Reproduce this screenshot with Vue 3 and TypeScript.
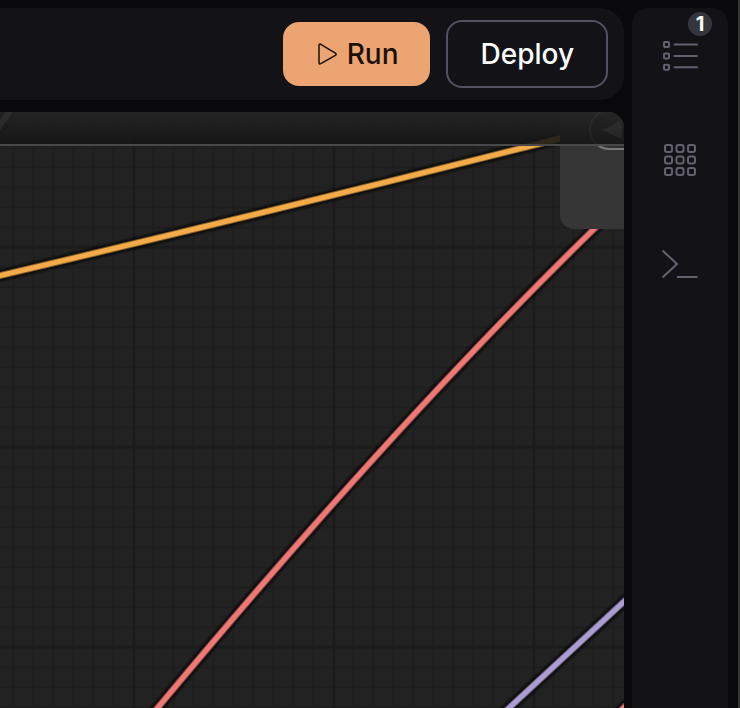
<script setup lang="ts">
interface Wire {
  id: string
  color: string
  d: string
}

const minor = 20
const major = 200

const wires: Wire[] = [
  { id: 'image', color: '#f3ab4a', d: 'M-10 166 L0 163.6 Q285 96.4 570 24' },
  { id: 'model', color: '#ee7873', d: 'M618 94 L593 118 Q396 310 157.5 596 L140 617' },
  { id: 'latent', color: '#ab9cd2', d: 'M640 475 L624 489.6 L509 596 L490 614' },
  { id: 'output', color: '#ee7873', d: 'M640 579 L608 612' },
  { id: 'other', color: '#8d8a9c', d: 'M-9 26 L15 -8' },
]

const halos = [14, 12, 10, 8]

const cells = [0, 1, 2].flatMap((row) =>
  [0, 1, 2].map((col) => ({ x: 5 + col * 11.5, y: 5 + row * 11.5 })),
)
const listRows = [8.5, 20, 31.2]
const queued = 1
</script>

<template>
  <div class="app">
    <main class="workspace">
      <header class="toolbar">
        <button class="btn run" type="button">
          <svg class="play" viewBox="0 0 24 24" aria-hidden="true">
            <path d="M4 3.4V20.6Q4 22.6 5.8 21.7L20.4 13.4Q21.8 12.3 20.4 11.1L5.8 2.3Q4 1.5 4 3.4Z" />
          </svg>
          Run
        </button>
        <button class="btn deploy" type="button">Deploy</button>
      </header>

      <section class="canvas">
        <svg class="graph" aria-hidden="true">
          <defs>
            <pattern id="minor" x="3" y="5" :width="minor" :height="minor" patternUnits="userSpaceOnUse">
              <path d="M10.5 0V20M0 10.5H20" class="grid-line" />
            </pattern>
            <pattern id="major" x="34" y="35" :width="major" :height="major" patternUnits="userSpaceOnUse">
              <path d="M100 0V200M0 100H200" class="grid-line strong" />
            </pattern>
          </defs>
          <rect width="100%" height="100%" fill="url(#minor)" />
          <rect width="100%" height="100%" fill="url(#major)" />
          <g v-for="w in wires" :key="w.id">
            <path v-for="size in halos" :key="size" :d="w.d" class="halo" :stroke-width="size" />
            <path :d="w.d" class="wire edge" :stroke="w.color" />
            <path :d="w.d" class="wire" :stroke="w.color" />
          </g>
          <rect class="node" x="560" y="-60" width="240" height="177" rx="14" />
          <rect class="field" x="590" y="-2" width="180" height="39" rx="19.5" />
          <path class="arrow" d="M602 18L622 8V27Z" />
        </svg>
        <div class="strip"></div>
      </section>
    </main>

    <nav class="rail">
      <button class="tool" type="button" aria-label="Queue">
        <svg class="icon" viewBox="0 0 40 40" aria-hidden="true">
          <g v-for="y in listRows" :key="y">
            <rect x="4" :y="y - 2.5" width="5" height="5" rx="1" />
            <path :d="`M14.5 ${y}H37`" />
          </g>
        </svg>
        <span class="badge">{{ queued }}</span>
      </button>
      <button class="tool" type="button" aria-label="Nodes">
        <svg class="icon" viewBox="0 0 40 40" aria-hidden="true">
          <rect v-for="(c, i) in cells" :key="i" :x="c.x" :y="c.y" width="7" height="7" rx="2" />
        </svg>
      </button>
      <button class="tool" type="button" aria-label="Console">
        <svg class="icon prompt" viewBox="0 0 40 40" aria-hidden="true">
          <path d="M2.5 6.5L17 20L2.5 33.5M17 33H37.5" />
        </svg>
      </button>
    </nav>
  </div>
</template>

<style>
body {
  margin: 0;
  background: #09090b;
}
</style>

<style scoped>
.app {
  box-sizing: border-box;
  display: flex;
  gap: 8px;
  min-height: 100vh;
  padding: 8px 10px 0 0;
  border-right: 2px solid #363636;
  background: #09090b;
  font-family: Inter, "Liberation Sans", sans-serif;
}

.workspace {
  display: flex;
  flex: 1;
  flex-direction: column;
  gap: 12px;
  min-width: 0;
}

.toolbar {
  display: flex;
  align-items: center;
  justify-content: flex-end;
  gap: 16px;
  padding: 12px 16px;
  border-radius: 0 24px 24px 0;
  background: #131217;
}

.btn {
  display: flex;
  align-items: center;
  gap: 8px;
  height: 64px;
  padding: 0 32px;
  border: 0;
  border-radius: 16px;
  font: 500 28px/32px Inter, "Liberation Sans", sans-serif;
  cursor: pointer;
}

.run {
  background: #eca572;
  color: #1c0f06;
}

.deploy {
  height: 68px;
  border: 2px solid #545260;
  background: transparent;
  color: #fff;
}

.play {
  width: 24px;
  height: 24px;
  fill: none;
  stroke: currentColor;
  stroke-width: 1.5;
  stroke-linejoin: round;
}

.canvas {
  position: relative;
  display: flex;
  flex: 1;
  overflow: hidden;
  border-radius: 0 16px 0 0;
  background: #222;
}

.graph {
  flex: 1;
  width: 100%;
  min-width: 0;
}

.grid-line {
  fill: none;
  stroke: #1e1e1e;
  stroke-width: 2;
}

.grid-line.strong {
  stroke: #1b1b1b;
  stroke-width: 3;
}

.halo {
  fill: none;
  stroke: #000;
  stroke-opacity: 0.2;
}

.wire {
  fill: none;
  stroke-width: 5;
}

.wire.edge {
  stroke-opacity: 0.5;
  stroke-width: 7;
}

.node {
  fill: #363636;
}

.field {
  fill: #222;
  fill-opacity: 0.3;
  stroke: #777;
  stroke-width: 2;
}

.arrow {
  fill: #999;
}

.strip {
  position: absolute;
  inset: 0 0 auto;
  height: 32px;
  border-bottom: 2px solid #484848;
  background: linear-gradient(rgba(36, 36, 36, 0.9), rgba(20, 20, 20, 0.88));
}

.rail {
  display: flex;
  flex-direction: column;
  gap: 8px;
  width: 96px;
  border-radius: 16px 16px 0 0;
  background: #131217;
}

.tool {
  position: relative;
  display: flex;
  align-items: center;
  justify-content: center;
  height: 96px;
  padding: 0;
  border: 0;
  background: transparent;
  cursor: pointer;
}

.icon {
  width: 40px;
  height: 40px;
  fill: none;
  stroke: #646270;
  stroke-width: 2;
  stroke-linecap: round;
}

.icon.prompt {
  stroke-linecap: butt;
}

.badge {
  position: absolute;
  top: 4px;
  right: 16px;
  width: 24px;
  border-radius: 12px;
  background: #35353d;
  color: #fff;
  font: 700 20px/24px Inter, "Liberation Sans", sans-serif;
  text-align: center;
}
</style>
